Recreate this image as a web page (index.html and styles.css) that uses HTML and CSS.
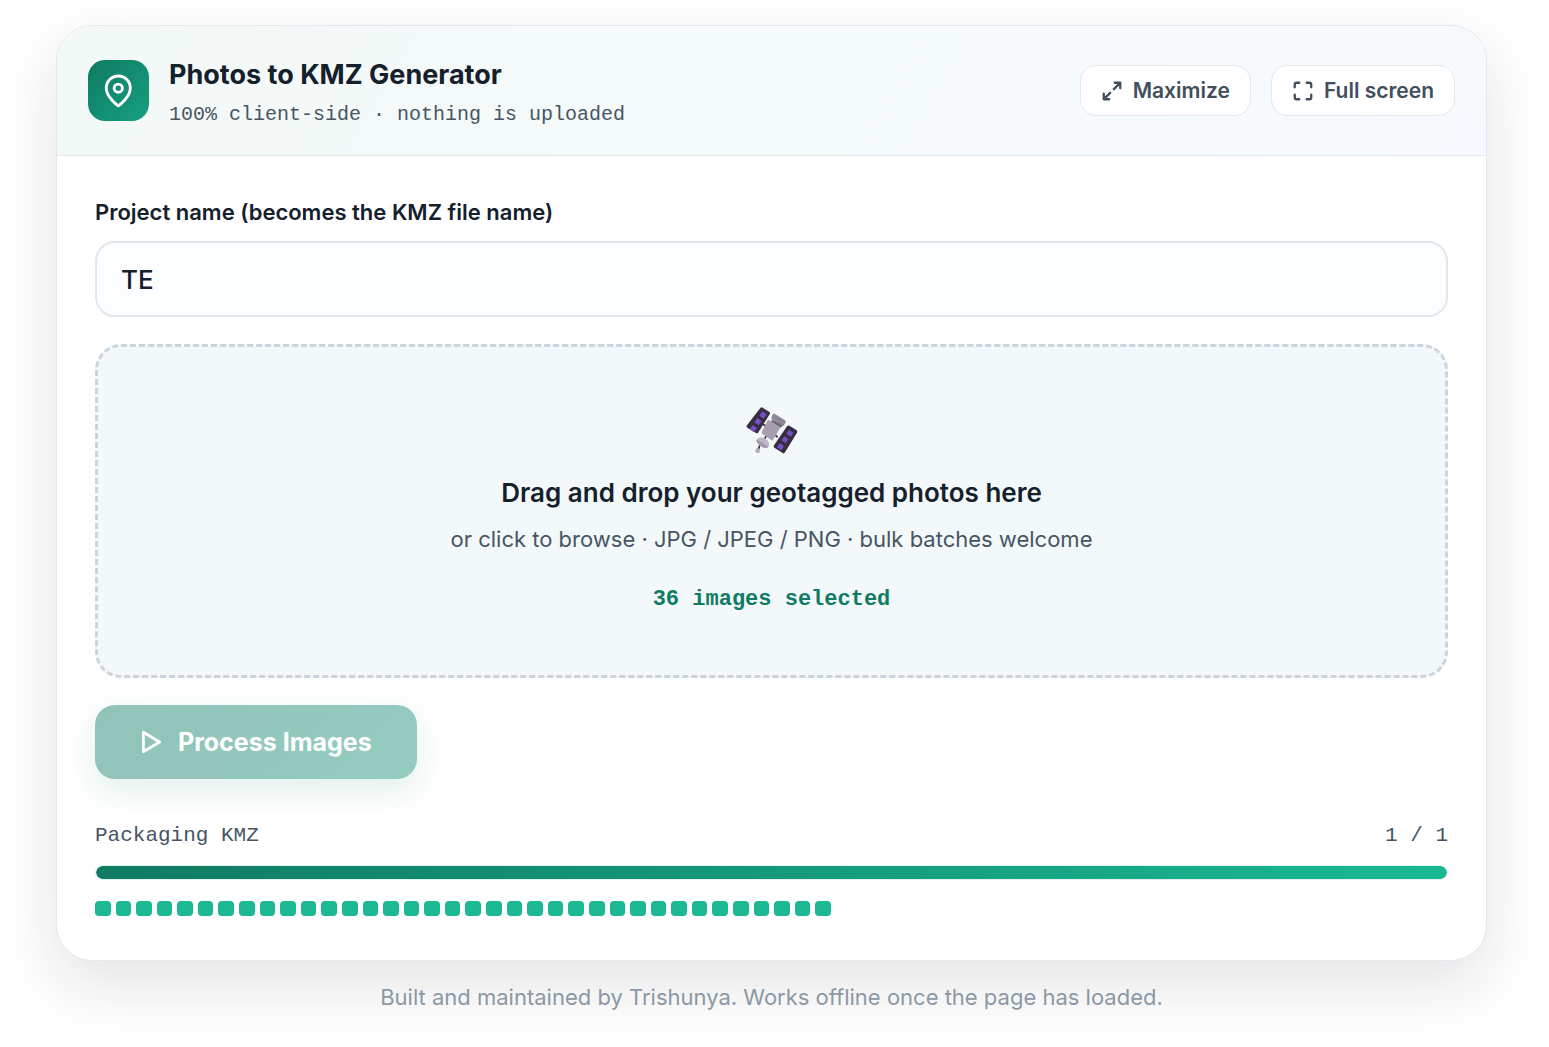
FILE: index.html
```html
<!DOCTYPE html>
<html lang="en">
<head>
<meta charset="utf-8">
<meta name="viewport" content="width=device-width, initial-scale=1">
<title>Photos to KMZ Generator</title>
<link rel="stylesheet" href="styles.css">
</head>
<body>
<main class="card">
  <header class="card-header">
    <span class="logo">
      <svg width="34" height="34" viewBox="0 0 24 24" fill="none" stroke="currentColor" stroke-width="2" stroke-linecap="round" stroke-linejoin="round" aria-hidden="true"><path d="M11.500 22.500C11.500 22.500 20 16.500 20 9.900A8.500 8.500 0 0 0 3 9.900C3 16.500 11.500 22.500 11.500 22.500Z"/><circle cx="11.500" cy="10" r="2.900"/></svg>
    </span>
    <div class="heading">
      <h1 class="title">Photos to KMZ Generator</h1>
      <p class="subtitle">100% client-side · nothing is uploaded</p>
    </div>
    <div class="actions">
      <button class="tool-button" type="button">
        <svg width="22" height="22" viewBox="0 0 24 24" fill="none" stroke="currentColor" stroke-width="2.500" stroke-linecap="round" stroke-linejoin="round" aria-hidden="true"><path d="M15 3h6v6M21 3l-7 7M9 21H3v-6M3 21l7-7"/></svg>
        Maximize
      </button>
      <button class="tool-button" type="button">
        <svg width="22" height="22" viewBox="0 0 24 24" fill="none" stroke="currentColor" stroke-width="2.500" stroke-linecap="round" stroke-linejoin="round" aria-hidden="true"><path d="M8 3H5a2 2 0 0 0-2 2v3M21 8V5a2 2 0 0 0-2-2h-3M3 16v3a2 2 0 0 0 2 2h3M16 21h3a2 2 0 0 0 2-2v-3"/></svg>
        Full screen
      </button>
    </div>
  </header>
  <div class="card-body">
    <label class="field-label" for="project">Project name (becomes the KMZ file name)</label>
    <input class="field-input" id="project" type="text" value="TE">
    <label class="dropzone" for="photos">
      <svg class="satellite" width="52" height="48" viewBox="45 36 156 144" aria-hidden="true">
        <path d="M96 88l12 7M126 116l14 10M106 122l-9 17M86 151l-5 16" stroke="#36293f" stroke-width="5"/>
        <path d="M95 38l20 13q4 3 1 7L82 112q-3 5-7 2L49 98q-4-3-1-7l40-52q3-4 7-1z" fill="#382d42"/>
        <path d="M175 92l21 13q5 3 2 8l-36 59q-3 5-7 2l-25-16q-4-3-1-7l39-57q3-4 7-2z" fill="#382d42"/>
        <path d="M94 49l13 9-9 13-13-9zM79 69l13 9-9 13-13-9zM65 90l13 9-9 13-13-9zM174 104l13 9-8 12-13-8zM160 124l12 8-8 13-13-9zM146 145l13 8-8 13-13-9z" fill="#7350c4"/>
        <path d="M125 58q3-4 7-1l30 19q4 3 1 8l-6 9-36-23z" fill="#8e8794"/>
        <path d="M109 77q2-4 6-1l30 19q4 2 1 6l-20 33q-2 4-6 1L94 116q-4-3-1-6z" fill="#a89eaf"/>
        <path d="M122 72l35 19-8 7-28-18z" fill="#736b79"/>
        <path d="M75 136c8-11 20-12 30-4 10 7 12 16 6 26-15 3-28-5-36-22z" fill="#c1b5c7"/>
        <path d="M75 136c11 1 27 9 36 22-15 3-28-5-36-22z" fill="#a397ac"/>
        <circle cx="80" cy="167" r="7" fill="#b5a6bd"/>
      </svg>
      <span class="drop-title">Drag and drop your geotagged photos here</span>
      <span class="drop-hint">or click to browse · JPG / JPEG / PNG · bulk batches welcome</span>
      <span class="drop-count">36 images selected</span>
      <input class="file-input" id="photos" type="file" accept=".jpg,.jpeg,.png" multiple>
    </label>
    <button class="process-button" type="button" disabled>
      <svg width="26" height="26" viewBox="0 0 24 24" fill="none" stroke="currentColor" stroke-width="2.500" stroke-linecap="round" stroke-linejoin="round" aria-hidden="true"><path d="M5 3v18l15-9z"/></svg>
      Process Images
    </button>
    <div class="status"><span>Packaging KMZ</span><span>1 / 1</span></div>
    <div class="progress" role="progressbar" aria-label="Packaging KMZ" aria-valuemin="0" aria-valuemax="1" aria-valuenow="1"><div class="progress-fill" style="width: 100%"></div></div>
    <div class="tiles">
      <i></i><i></i><i></i><i></i><i></i><i></i><i></i><i></i><i></i><i></i><i></i><i></i>
      <i></i><i></i><i></i><i></i><i></i><i></i><i></i><i></i><i></i><i></i><i></i><i></i>
      <i></i><i></i><i></i><i></i><i></i><i></i><i></i><i></i><i></i><i></i><i></i><i></i>
    </div>
  </div>
</main>
<footer class="footer">Built and maintained by Trishunya. Works offline once the page has loaded.</footer>
</body>
</html>
```
FILE: styles.css
```css
* {
  box-sizing: border-box;
}

body {
  margin: 0;
  padding: 25px 62px 24px 56px;
  background: #fff;
  color: #14202b;
  font-family: Inter, "Liberation Sans", sans-serif;
}

.card {
  border: 1px solid #e2e8ee;
  border-radius: 36px;
  background: #fff;
  box-shadow: 0 24px 64px rgba(24, 28, 42, 0.12);
  overflow: hidden;
}

.card-header {
  display: flex;
  align-items: center;
  gap: 20px;
  min-height: 130px;
  padding: 28px 31px 24px;
  border-bottom: 1px solid #e2e8ec;
  background: linear-gradient(120deg, #f3f9f7, #f6fafe);
}

.logo {
  display: grid;
  place-items: center;
  flex: none;
  width: 61px;
  height: 61px;
  margin-bottom: 4px;
  border-radius: 17px;
  background: linear-gradient(135deg, #0f7b63, #169f80);
  color: #fff;
}

.heading {
  flex: 1;
}

.title {
  margin: 0;
  font-size: 27px;
  font-weight: 700;
  line-height: 36px;
}

.subtitle {
  margin: 8px 0 0;
  color: #475563;
  font-family: "Liberation Mono", monospace;
  font-size: 20px;
  line-height: 28px;
}

.actions {
  display: flex;
  gap: 20px;
  margin-bottom: 4px;
}

.tool-button {
  display: flex;
  align-items: center;
  gap: 10px;
  height: 51px;
  padding: 0 20px;
  border: 1px solid #e2e8ec;
  border-radius: 16px;
  background: #fff;
  color: #414e5b;
  font: 600 21px Inter, sans-serif;
}

.card-body {
  padding: 40px 38px 44px;
}

.field-label {
  display: block;
  margin-bottom: 13px;
  font-size: 22px;
  font-weight: 600;
  line-height: 32px;
}

.field-input {
  display: block;
  width: 100%;
  height: 76px;
  padding: 0 24px;
  border: 2px solid #e2e7eb;
  border-radius: 20px;
  background: #fcfdfe;
  color: #14202b;
  font: 500 26px Inter, sans-serif;
}

.dropzone {
  display: flex;
  flex-direction: column;
  align-items: center;
  min-height: 334px;
  margin: 27px 0;
  padding: 60px 24px 56px;
  border: 3px dashed #cbd5db;
  border-radius: 26px;
  background: #f3f8fb;
  text-align: center;
}

.satellite {
  margin-bottom: 18px;
}

.drop-title {
  font-size: 26px;
  font-weight: 600;
  line-height: 40px;
}

.drop-hint {
  margin-top: 8px;
  color: #475563;
  font-size: 22px;
  line-height: 36px;
}

.drop-count {
  margin-top: 25px;
  color: #0f7b63;
  font-family: "Liberation Mono", monospace;
  font-size: 22px;
  font-weight: 700;
  line-height: 36px;
}

.file-input {
  width: 1px;
  height: 1px;
  opacity: 0;
}

.process-button {
  display: flex;
  align-items: center;
  gap: 14px;
  height: 74px;
  padding: 0 45px 0 43px;
  border: 0;
  border-radius: 20px;
  background: linear-gradient(135deg, #0f7b63, #149076);
  box-shadow: 0 12px 32px rgba(15, 123, 99, 0.25);
  color: #fff;
  font: 700 25px Inter, sans-serif;
  opacity: 0.45;
}

.status {
  display: flex;
  justify-content: space-between;
  margin: 42px 0 14px;
  color: #475563;
  font-family: "Liberation Mono", monospace;
  font-size: 21px;
  line-height: 30px;
}

.progress {
  height: 15px;
  border: 1px solid #e2f3ee;
  border-radius: 8px;
  background: #edf3f6;
  overflow: hidden;
}

.progress-fill {
  height: 100%;
  border-radius: 7px;
  background: linear-gradient(90deg, #0f7b63, #1bb893);
}

.tiles {
  display: grid;
  grid-template-columns: repeat(36, 1fr);
  gap: 5px;
  max-width: 736px;
  margin-top: 21px;
}

.tiles i {
  height: 15px;
  border-radius: 4px;
  background: #1bb893;
}

.footer {
  margin-top: 20px;
  color: #8b98a5;
  font-size: 22px;
  line-height: 32px;
  text-align: center;
}
```
